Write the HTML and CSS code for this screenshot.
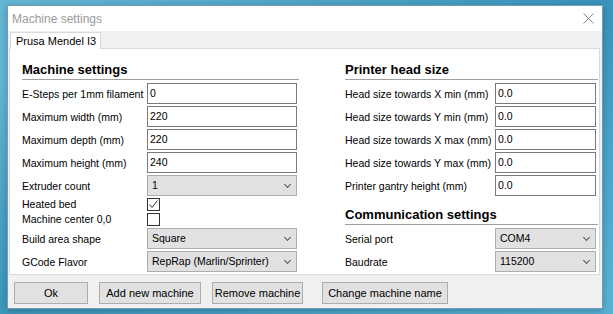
FILE: index.html
```html
<!DOCTYPE html>
<html lang="en">

<head>
  <meta charset="UTF-8">
  <title>Machine settings</title>
  <link rel="stylesheet" href="styles.css">
</head>

<body>
  <div class="window">
    <div class="titlebar">
      <span class="title">Machine settings</span>
      <svg class="close" width="11" height="11" viewBox="0 0 11 11">
        <path d="M0.5 0.5 L10.5 10.5 M10.5 0.5 L0.5 10.5" stroke="#8a8a8a" stroke-width="1" fill="none" />
      </svg>
    </div>
    <div class="content">
      <div class="tabs">
        <span class="tab">Prusa Mendel I3</span>
      </div>
      <div class="panel">
        <div class="col left-col">
          <h2 class="heading">Machine settings</h2>
          <div class="rows">
            <label>E-Steps per 1mm filament</label>
            <div class="input">0</div>
            <label>Maximum width (mm)</label>
            <div class="input">220</div>
            <label>Maximum depth (mm)</label>
            <div class="input">220</div>
            <label>Maximum height (mm)</label>
            <div class="input">240</div>
            <label>Extruder count</label>
            <div class="select">1<i class="chev"></i></div>
            <label class="short">Heated bed</label>
            <div class="check checked">
              <svg width="11" height="11" viewBox="0 0 11 11">
                <path d="M1.5 5.5 L4 8.5 L9.5 1.5" stroke="#333" stroke-width="1" fill="none" />
              </svg>
            </div>
            <label class="short">Machine center 0,0</label>
            <div class="check"></div>
            <label>Build area shape</label>
            <div class="select">Square<i class="chev"></i></div>
            <label>GCode Flavor</label>
            <div class="select">RepRap (Marlin/Sprinter)<i class="chev"></i></div>
          </div>
        </div>
        <div class="col right-col">
          <h2 class="heading">Printer head size</h2>
          <div class="rows">
            <label>Head size towards X min (mm)</label>
            <div class="input">0.0</div>
            <label>Head size towards Y min (mm)</label>
            <div class="input">0.0</div>
            <label>Head size towards X max (mm)</label>
            <div class="input">0.0</div>
            <label>Head size towards Y max (mm)</label>
            <div class="input">0.0</div>
            <label>Printer gantry height (mm)</label>
            <div class="input">0.0</div>
          </div>
          <h2 class="heading second">Communication settings</h2>
          <div class="rows">
            <label>Serial port</label>
            <div class="select">COM4<i class="chev"></i></div>
            <label>Baudrate</label>
            <div class="select">115200<i class="chev"></i></div>
          </div>
        </div>
      </div>
      <div class="buttons">
        <button class="ok">Ok</button>
        <button class="add">Add new machine</button>
        <button class="remove">Remove machine</button>
        <button class="rename">Change machine name</button>
      </div>
    </div>
  </div>
</body>

</html>
```

FILE: styles.css
```css
* {
  margin: 0;
  padding: 0;
  box-sizing: border-box;
}

body {
  width: 613px;
  height: 314px;
  overflow: hidden;
  padding: 5px 0 0 7px;
  font-family: "Liberation Sans", Arial, sans-serif;
  font-size: 10.5px;
  color: #000;
  background:
    linear-gradient(160deg, rgba(255, 255, 255, 0.12) 0%, rgba(255, 255, 255, 0) 40%),
    linear-gradient(20deg, #3f97bd 0%, #5ab3d6 45%, #4aa6cc 70%, #3a93ba 100%);
}

.window {
  width: 596px;
  height: 304px;
  border: 1px solid #6f9fb8;
  background-color: #f0f0f0;
  display: flex;
  flex-direction: column;
  box-shadow: 0 2px 8px rgba(0, 0, 0, 0.25);
}

.titlebar {
  height: 25px;
  background-color: #fff;
  display: flex;
  align-items: center;
  justify-content: space-between;
  padding: 0 8px 0 4px;
}

.title {
  font-size: 12px;
  color: #9a9a9a;
}

.content {
  flex: 1;
  display: flex;
  flex-direction: column;
  padding: 1px 2px 0 1px;
}

.tabs {
  display: flex;
  padding-left: 1px;
}

.tab {
  position: relative;
  z-index: 1;
  height: 17px;
  margin-bottom: -1px;
  padding: 0 5px;
  width: 91px;
  white-space: nowrap;
  font-size: 11px;
  line-height: 16px;
  background-color: #fff;
  border: 1px solid #d9d9d9;
  border-bottom: none;
}

.panel {
  height: 227px;
  background-color: #fff;
  border: 1px solid #d9d9d9;
  display: flex;
  gap: 46px;
  padding-left: 12px;
}

.left-col {
  width: 277px;
}

.right-col {
  width: 253px;
}

.heading {
  font-size: 13px;
  font-weight: bold;
  line-height: 18px;
  padding-top: 12px;
  border-bottom: 1px solid #a0a0a0;
  margin-bottom: 3px;
}

.heading.second {
  padding-top: 10px;
}

.rows {
  display: grid;
  row-gap: 2px;
  align-items: center;
}

.left-col .rows {
  grid-template-columns: 125px 150px;
}

.right-col .rows {
  grid-template-columns: 150px 101px;
}

label {
  white-space: nowrap;
}

.input {
  height: 21px;
  line-height: 19px;
  padding-left: 2px;
  border: 1px solid #7a7a7a;
  background-color: #fff;
}

.select {
  position: relative;
  height: 21px;
  line-height: 19px;
  padding-left: 4px;
  border: 1px solid #adadad;
  background-color: #e1e1e1;
}

.chev {
  position: absolute;
  right: 6px;
  top: 6px;
  width: 5px;
  height: 5px;
  border-right: 1px solid #555;
  border-bottom: 1px solid #555;
  transform: rotate(45deg);
}

.short {
  line-height: 13px;
}

.check {
  width: 13px;
  height: 13px;
  border: 1px solid #333;
  background-color: #fff;
}

.check svg {
  display: block;
}

.buttons {
  display: flex;
  padding: 7px 0 0 5px;
}

button {
  height: 22px;
  font-family: inherit;
  font-size: 11px;
  color: #000;
  background-color: #e1e1e1;
  border: 1px solid #adadad;
  margin-right: 11px;
}

.ok {
  width: 74px;
}

.add {
  width: 102px;
}

.remove {
  width: 91px;
  margin-right: 19px;
}

.rename {
  width: 126px;
}
```
